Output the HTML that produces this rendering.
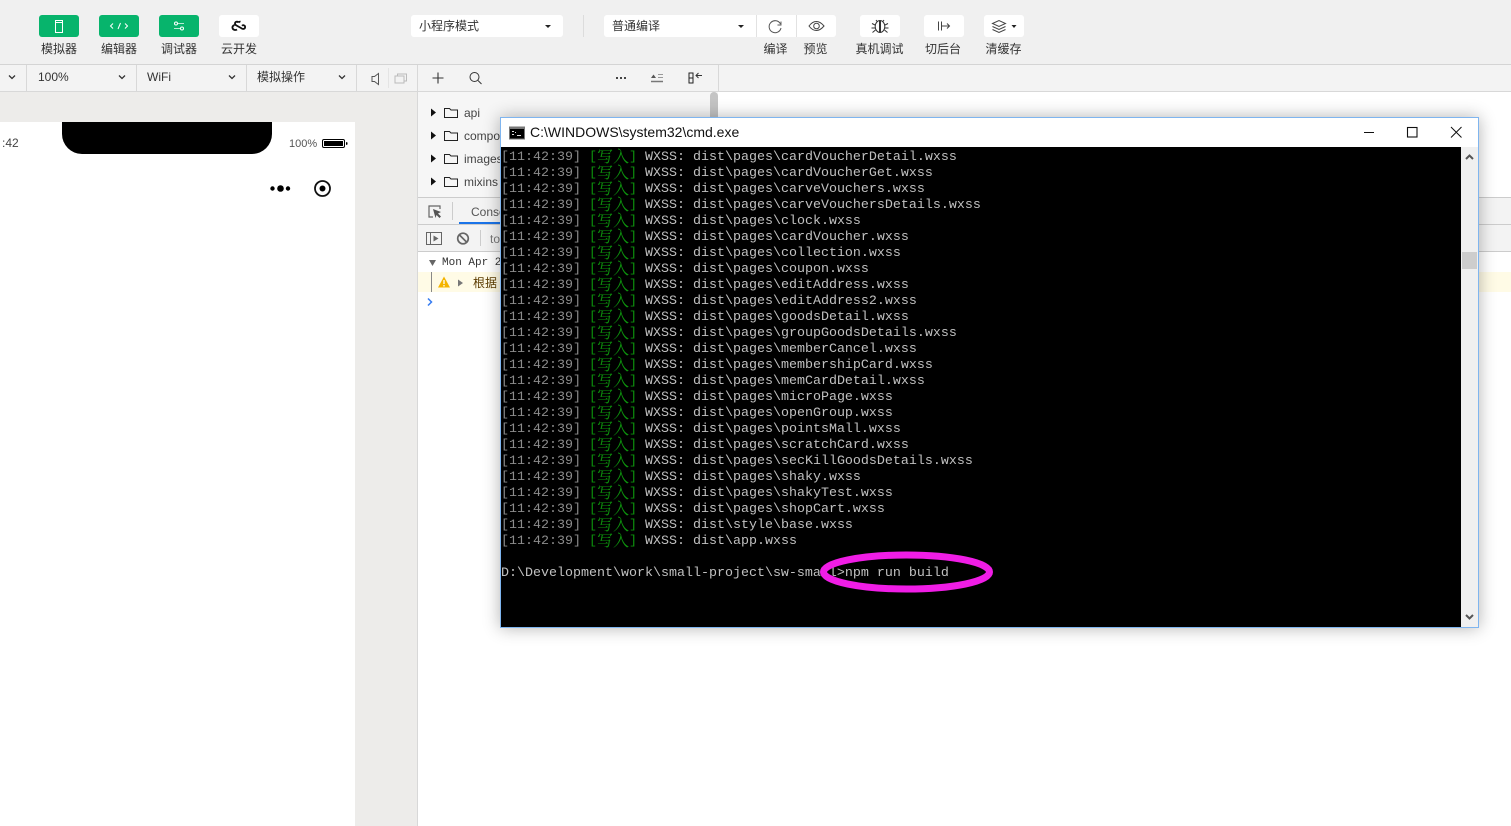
<!DOCTYPE html>
<html><head><meta charset="utf-8"><style>
html,body{margin:0;padding:0;width:1511px;height:826px;overflow:hidden;background:#fff}
body{position:relative;font-family:"Liberation Sans","Noto Sans CJK SC",sans-serif;font-size:12px;color:#333}
.a{position:absolute}
.t{position:absolute;white-space:nowrap;line-height:16px}
.b{position:absolute;top:15px;height:22px;border-radius:3px;background:#fff}
.g{background:#07b46c}
.l{position:absolute;top:41px;width:60px;text-align:center;line-height:16px;color:#333;white-space:nowrap}
svg{position:absolute;overflow:visible}
#term{position:absolute;left:501px;top:147px;width:960px;height:477px;padding-top:3px;background:#000;overflow:hidden;font-family:"Liberation Mono",monospace;font-size:13.33px;line-height:16px;color:#c0c0c0;white-space:pre}
#term div{height:16px}
#term i{font-style:normal;color:#8c8c8c}
#term b{font-weight:normal;color:#0d900d;font-family:"Liberation Mono","Noto Serif CJK SC",monospace}
#term u{text-decoration:none;display:inline-block;width:16px;text-align:center;font-size:16px;line-height:16px;vertical-align:top}
</style></head><body>

<div class="a" style="left:0;top:0;width:1511px;height:64px;background:#f0f0f0"></div>
<div class="a" style="left:0;top:64px;width:1511px;height:1px;background:#d4d4d4"></div>
<div class="a" style="left:0;top:65px;width:1511px;height:26px;background:#f3f3f3"></div>
<div class="a" style="left:0;top:91px;width:1511px;height:1px;background:#d8d8d8"></div>

<!-- top left buttons -->
<div class="b g" style="left:39px;width:40px"></div>
<svg style="left:39px;top:15px" width="40" height="22"><rect x="16.500" y="5.500" width="7" height="12" fill="none" stroke="#fff"/><line x1="16.500" y1="7.500" x2="23.500" y2="7.500" stroke="#fff"/></svg>
<div class="b g" style="left:99px;width:40px"></div>
<svg style="left:99px;top:15px" width="40" height="22" fill="none" stroke="#fff"><path d="M14 8.500l-2.500 2.500 2.500 2.500M26 8.500l2.500 2.500-2.500 2.500M21.500 8l-2.500 6"/></svg>
<div class="b g" style="left:159px;width:40px"></div>
<svg style="left:159px;top:15px" width="40" height="22" fill="none" stroke="#fff"><path d="M15 8.500h10M15 13.500h10" opacity=".7"/><circle cx="17" cy="8.500" r="1.500" fill="#07b46c"/><circle cx="23" cy="13.500" r="1.500" fill="#07b46c"/></svg>
<div class="b" style="left:219px;width:40px"></div>
<svg style="left:219px;top:15px" width="40" height="22" fill="none" stroke="#111" stroke-width="1.800"><path d="M19.500 7.500c-1-1.500-3.500-.8-3.500 1 0 1 .6 1.500 1.500 2l4.500 2.500c1 .6 1.500 1.300 3 .8 1.500-.6 1.500-3-.1-3.500-.8-.3-1.400 0-1.900.5M18 14.500c-1.500 1-4 .5-4.500-1.500-.3-1.500.7-2.500 2-3M19.500 7.500c.5-.5 1.300-1 2-.8"/></svg>
<div class="l" style="left:29px">模拟器</div>
<div class="l" style="left:89px">编辑器</div>
<div class="l" style="left:149px">调试器</div>
<div class="l" style="left:209px">云开发</div>

<!-- mode select -->
<div class="b" style="left:411px;width:152px"></div>
<div class="t" style="left:419px;top:18px">小程序模式</div>
<div class="a" style="left:545px;top:25px;border:3px solid transparent;border-top:3px solid #222;border-bottom:0"></div>
<div class="a" style="left:583px;top:15px;width:1px;height:22px;background:#dcdcdc"></div>
<div class="b" style="left:604px;width:232px"></div>
<div class="t" style="left:612px;top:18px">普通编译</div>
<div class="a" style="left:738px;top:25px;border:3px solid transparent;border-top:3px solid #222;border-bottom:0"></div>
<div class="a" style="left:756px;top:15px;width:1px;height:22px;background:#e2e2e2"></div>
<div class="a" style="left:796px;top:15px;width:1px;height:22px;background:#e2e2e2"></div>
<svg style="left:756px;top:15px" width="40" height="22" fill="none" stroke="#555"><path d="M24.500 9a6 6 0 1 0 .5 4"/><path d="M25 6.500v3.500h-3.500" stroke-width=".9"/></svg>
<svg style="left:796px;top:15px" width="40" height="22" fill="none" stroke="#444"><path d="M13 11c4.500-6 10-6 15 0-5 6-10.500 6-15 0z"/><circle cx="20.500" cy="11" r="2.800"/></svg>
<div class="b" style="left:860px;width:40px"></div>
<svg style="left:860px;top:15px" width="40" height="22" fill="none" stroke="#333"><ellipse cx="20" cy="11.500" rx="4.800" ry="6"/><path d="M16 5l1.500 2M24 5l-1.500 2M15 10l-3-1.500M25 10l3-1.500M15 13h-3.500M25 13h3.500M15.500 15l-3 2.500M24.500 15l3 2.500"/><path d="M20 6v11" stroke-width="2"/></svg>
<div class="b" style="left:924px;width:40px"></div>
<svg style="left:924px;top:15px" width="40" height="22" fill="none" stroke="#444"><path d="M14.500 6.500v9M17.500 6.500v9M17.500 11h8M23 8.500l2.500 2.500-2.500 2.500"/></svg>
<div class="b" style="left:984px;width:40px"></div>
<svg style="left:984px;top:15px" width="40" height="22" fill="none" stroke="#444"><path d="M8.500 8.500l6.500-3 6.500 3-6.500 3zM8.500 11.500l6.500 3 6.500-3M8.500 14.500l6.500 3 6.500-3"/><path d="M27.500 10h5l-2.500 3z" fill="#222" stroke="none"/></svg>
<div class="l" style="left:745.500px">编译</div>
<div class="l" style="left:785.500px">预览</div>
<div class="l" style="left:849.500px">真机调试</div>
<div class="l" style="left:913px">切后台</div>
<div class="l" style="left:973.500px">清缓存</div>

<!-- row 2 -->
<div class="a" style="left:26px;top:65px;width:1px;height:26px;background:#d8d8d8"></div>
<div class="a" style="left:136px;top:65px;width:1px;height:26px;background:#d8d8d8"></div>
<div class="a" style="left:246px;top:65px;width:1px;height:26px;background:#d8d8d8"></div>
<div class="a" style="left:356px;top:65px;width:1px;height:26px;background:#d8d8d8"></div>
<div class="a" style="left:388px;top:68px;width:1px;height:20px;background:#e4e4e4"></div>
<div class="a" style="left:417px;top:65px;width:1px;height:761px;background:#d8d8d8"></div>
<div class="a" style="left:718px;top:65px;width:1px;height:26px;background:#d8d8d8"></div>
<svg style="left:0;top:65px" width="360" height="26" fill="none" stroke="#333" stroke-width="1.300"><path d="M9 10.500l3 3 3-3M119 10.500l3 3 3-3M229 10.500l3 3 3-3M339 10.500l3 3 3-3"/></svg>
<div class="t" style="left:38px;top:69px">100%</div>
<div class="t" style="left:147px;top:69px">WiFi</div>
<div class="t" style="left:257px;top:69px">模拟操作</div>
<svg style="left:368px;top:70px" width="50" height="18" fill="none"><path d="M4 6.500h2.500l4-3v11l-4-3H4z" stroke="#555"/><path d="M29.500 5.500v-1.500h9v7h-2M27 6h9v7h-9z" stroke="#bbb"/></svg>
<svg style="left:425px;top:65px" width="290" height="26" fill="none" stroke="#333"><path d="M13 7.500v11M7.500 13h11" stroke-width="1.100"/><circle cx="49.500" cy="12" r="4.500"/><path d="M53 15.500l3.500 3.500"/>
<path d="M191 13h2M195 13h2M199 13h2" stroke-width="2" stroke="#444"/>
<path d="M226 16.500h12" stroke="#777" stroke-width="1.500"/><path d="M233 12.500h5M233 9.500h5" stroke="#999"/><path d="M226 13l2.500-3.500 2.500 3.500z" fill="#555" stroke="none"/>
<rect x="264" y="8" width="4" height="10" stroke="#222"/><path d="M264 13h4" stroke="#222"/><path d="M271 10.500h6M273.500 8l-2.500 2.500 2.500 2.500" stroke="#333"/></svg>

<!-- simulator -->
<div class="a" style="left:0;top:92px;width:417px;height:734px;background:#edecea"></div>
<div class="a" style="left:0;top:122px;width:355px;height:704px;background:#fff"></div>
<div class="a" style="left:62px;top:122px;width:210px;height:32px;background:#000;border-radius:0 0 20px 20px"></div>
<div class="t" style="left:2px;top:135px;color:#444">:42</div>
<div class="t" style="left:289px;top:136px;font-size:11px;color:#555">100%</div>
<svg style="left:322px;top:139px" width="26" height="10"><rect x=".5" y=".5" width="22" height="8" rx="1.500" fill="#fff" stroke="#000"/><rect x="2" y="2" width="19" height="5" fill="#000"/><path d="M24 3l1.500 .5v2l-1.500 .5z" fill="#000"/></svg>
<svg style="left:268px;top:178px" width="66" height="20"><circle cx="4.500" cy="10.500" r="2.200"/><circle cx="12.500" cy="10.500" r="3.300"/><circle cx="20" cy="10.500" r="2.200"/><circle cx="54.500" cy="10.500" r="7.500" fill="none" stroke="#111" stroke-width="1.800"/><circle cx="54.500" cy="10.500" r="3"/></svg>

<!-- file tree -->
<div class="a" style="left:418px;top:92px;width:300px;height:105px;background:#f6f6f6"></div>
<div class="a" style="left:710px;top:92px;width:8px;height:26px;background:#c4c4c4;border-radius:4px 4px 0 0"></div>
<svg style="left:430px;top:105px" width="30" height="90"><g fill="#111"><path d="M1 3.500l5 4-5 4zM1 26.500l5 4-5 4zM1 49.500l5 4-5 4zM1 72.500l5 4-5 4z"/></g><g fill="none" stroke="#222"><path d="M14.500 3.500h5l1.500 1.500h6.500v7.500h-13zM14.500 26.500h5l1.500 1.500h6.500v7.500h-13zM14.500 49.500h5l1.500 1.500h6.500v7.500h-13zM14.500 72.500h5l1.500 1.500h6.500v7.500h-13z"/></g></svg>
<div class="t" style="left:464px;top:105px;color:#444">api</div>
<div class="t" style="left:464px;top:128px;color:#444">components</div>
<div class="t" style="left:464px;top:151px;color:#444">images</div>
<div class="t" style="left:464px;top:174px;color:#444">mixins</div>

<!-- devtools -->
<div class="a" style="left:418px;top:197px;width:1093px;height:27px;background:#f3f3f3;border-top:1px solid #ccc;box-sizing:border-box"></div>
<div class="a" style="left:418px;top:224px;width:1093px;height:27px;background:#f3f3f3;border-top:1px solid #ccc;box-sizing:border-box"></div>
<div class="a" style="left:418px;top:251px;width:1093px;height:1px;background:#ccc"></div>
<div class="a" style="left:418px;top:272px;width:1093px;height:20px;background:#fffbe6"></div>
<div class="a" style="left:431px;top:272px;width:1px;height:20px;background:#888"></div>
<div class="a" style="left:459px;top:222px;width:42px;height:2px;background:#1a73e8"></div>
<div class="a" style="left:452px;top:202px;width:1px;height:18px;background:#ccc"></div>
<div class="a" style="left:480px;top:230px;width:1px;height:16px;background:#ccc"></div>
<div class="t" style="left:471px;top:204px;color:#555">Console</div>
<div class="t" style="left:490px;top:231px;color:#777">top</div>
<svg style="left:425px;top:203px" width="20" height="18" fill="none"><path d="M15 6v-3h-11v11h4" stroke="#666" stroke-width="1.200"/><path d="M8 6l8 3-3 1.500 3 3-1.500 1.500-3-3-1 3z" fill="#555"/></svg>
<svg style="left:425px;top:230px" width="50" height="18" fill="none"><rect x="1.500" y="2.500" width="15" height="12" stroke="#666"/><path d="M5.500 2.500v12" stroke="#666"/><path d="M8.500 5.500l5 3-5 3z" fill="#666"/><circle cx="38" cy="8.500" r="5.300" stroke="#666" stroke-width="1.700"/><path d="M34.500 5l7 7" stroke="#666" stroke-width="1.700"/></svg>
<svg style="left:428px;top:258px" width="10" height="10"><path d="M1 2h7l-3.500 6z" fill="#666"/></svg>
<div class="t" style="left:442px;top:255px;font-family:'Liberation Mono',monospace;font-size:11px;color:#333">Mon Apr 2</div>
<svg style="left:437px;top:276px" width="30" height="14"><path d="M7 .5l6 11h-12z" fill="#f4b400"/><path d="M7 4v4M7 9v1.500" stroke="#fff" stroke-width="1.300"/><path d="M21 3.500l5 3.500-5 3.500z" fill="#777"/></svg>
<div class="t" style="left:473px;top:275px;color:#5c3c00">根据</div>
<svg style="left:426px;top:297px" width="10" height="10" fill="none"><path d="M2 1.500l3.500 3.500-3.500 3.500" stroke="#367cf1" stroke-width="1.500"/></svg>

<!-- cmd window -->
<div class="a" style="left:500px;top:117px;width:979px;height:511px;box-sizing:border-box;background:#fff;border:1px solid #7fb5ef;box-shadow:0 0 16px rgba(0,0,0,.3)"></div>
<svg style="left:509px;top:126px" width="16" height="14"><rect width="16" height="13" y="0.500" fill="#777"/><rect x="1" y="3" width="14" height="9.500" fill="#000"/><path d="M3 5h2v1H3zM3 8h2v1H3zM6 6h1v1H6zM8 9h4v1H8z" fill="#ddd"/></svg>
<div class="t" style="left:530px;top:124px;font-size:14px;color:#111">C:\WINDOWS\system32\cmd.exe</div>
<svg style="left:1360px;top:122px" width="110" height="20" fill="none" stroke="#111"><path d="M4 10.500h10"/><rect x="47.500" y="5.500" width="9.500" height="9.500" stroke-width="1.100"/><path d="M91 5l10.500 10.500M101.500 5L91 15.500"/></svg>
<div class="a" style="left:1461px;top:147px;width:17px;height:480px;background:#f0f0f0"></div>
<div class="a" style="left:1462px;top:252px;width:15px;height:17px;background:#cdcdcd"></div>
<svg style="left:1461px;top:148px" width="17" height="479" fill="none" stroke="#555" stroke-width="2"><path d="M5 11l3.500-3.500 3.500 3.500M5 467l3.500 3.500 3.500-3.500"/></svg>

<div id="term"><div><i>[11:42:39]</i> <b>[<u>写</u><u>入</u>]</b> WXSS: dist\pages\cardVoucherDetail.wxss</div><div><i>[11:42:39]</i> <b>[<u>写</u><u>入</u>]</b> WXSS: dist\pages\cardVoucherGet.wxss</div><div><i>[11:42:39]</i> <b>[<u>写</u><u>入</u>]</b> WXSS: dist\pages\carveVouchers.wxss</div><div><i>[11:42:39]</i> <b>[<u>写</u><u>入</u>]</b> WXSS: dist\pages\carveVouchersDetails.wxss</div><div><i>[11:42:39]</i> <b>[<u>写</u><u>入</u>]</b> WXSS: dist\pages\clock.wxss</div><div><i>[11:42:39]</i> <b>[<u>写</u><u>入</u>]</b> WXSS: dist\pages\cardVoucher.wxss</div><div><i>[11:42:39]</i> <b>[<u>写</u><u>入</u>]</b> WXSS: dist\pages\collection.wxss</div><div><i>[11:42:39]</i> <b>[<u>写</u><u>入</u>]</b> WXSS: dist\pages\coupon.wxss</div><div><i>[11:42:39]</i> <b>[<u>写</u><u>入</u>]</b> WXSS: dist\pages\editAddress.wxss</div><div><i>[11:42:39]</i> <b>[<u>写</u><u>入</u>]</b> WXSS: dist\pages\editAddress2.wxss</div><div><i>[11:42:39]</i> <b>[<u>写</u><u>入</u>]</b> WXSS: dist\pages\goodsDetail.wxss</div><div><i>[11:42:39]</i> <b>[<u>写</u><u>入</u>]</b> WXSS: dist\pages\groupGoodsDetails.wxss</div><div><i>[11:42:39]</i> <b>[<u>写</u><u>入</u>]</b> WXSS: dist\pages\memberCancel.wxss</div><div><i>[11:42:39]</i> <b>[<u>写</u><u>入</u>]</b> WXSS: dist\pages\membershipCard.wxss</div><div><i>[11:42:39]</i> <b>[<u>写</u><u>入</u>]</b> WXSS: dist\pages\memCardDetail.wxss</div><div><i>[11:42:39]</i> <b>[<u>写</u><u>入</u>]</b> WXSS: dist\pages\microPage.wxss</div><div><i>[11:42:39]</i> <b>[<u>写</u><u>入</u>]</b> WXSS: dist\pages\openGroup.wxss</div><div><i>[11:42:39]</i> <b>[<u>写</u><u>入</u>]</b> WXSS: dist\pages\pointsMall.wxss</div><div><i>[11:42:39]</i> <b>[<u>写</u><u>入</u>]</b> WXSS: dist\pages\scratchCard.wxss</div><div><i>[11:42:39]</i> <b>[<u>写</u><u>入</u>]</b> WXSS: dist\pages\secKillGoodsDetails.wxss</div><div><i>[11:42:39]</i> <b>[<u>写</u><u>入</u>]</b> WXSS: dist\pages\shaky.wxss</div><div><i>[11:42:39]</i> <b>[<u>写</u><u>入</u>]</b> WXSS: dist\pages\shakyTest.wxss</div><div><i>[11:42:39]</i> <b>[<u>写</u><u>入</u>]</b> WXSS: dist\pages\shopCart.wxss</div><div><i>[11:42:39]</i> <b>[<u>写</u><u>入</u>]</b> WXSS: dist\style\base.wxss</div><div><i>[11:42:39]</i> <b>[<u>写</u><u>入</u>]</b> WXSS: dist\app.wxss</div><div></div><div>D:\Development\work\small-project\sw-small&gt;npm run build</div></div>

<svg style="left:0;top:0" width="1511" height="826" fill="none"><ellipse cx="906.500" cy="572" rx="83" ry="17" stroke="#f01de6" stroke-width="7"/></svg>
</body></html>
